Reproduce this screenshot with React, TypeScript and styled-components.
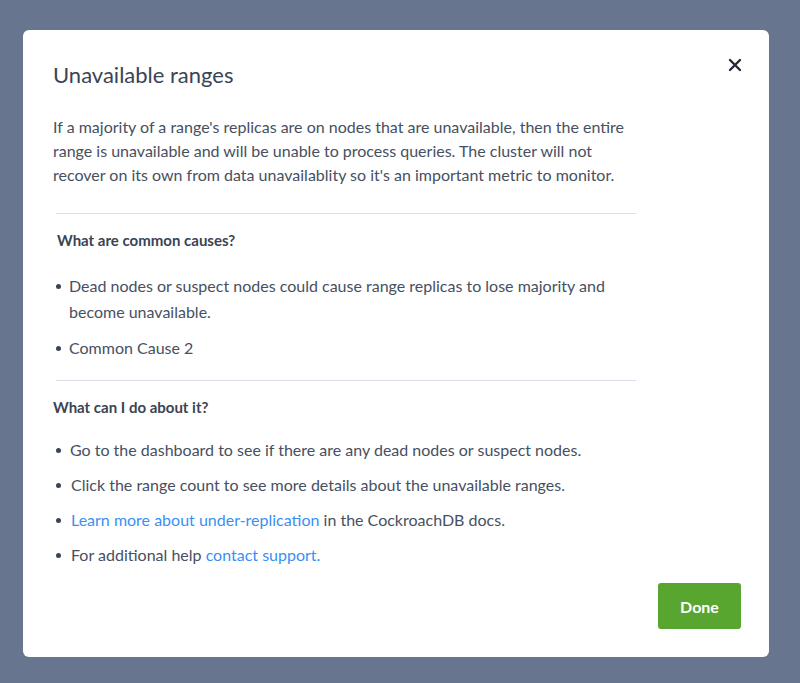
import React from 'react';
import styled, { createGlobalStyle } from 'styled-components';

const GlobalStyle = createGlobalStyle`
  html, body {
    margin: 0;
    padding: 0;
    background-color: #68758f;
    font-family: Lato, "Noto Sans", sans-serif;
  }
`

const Backdrop = styled.div`
  width: 800px;
  height: 683px;
  padding: 30px 31px 26px 23px;
  box-sizing: border-box;
  background-color: #68758f;
`

const Dialog = styled.div`
  width: 746px;
  height: 627px;
  box-sizing: border-box;
  background-color: #fff;
  border-radius: 6px;
  padding: 28px 28px 28px 30px;
  display: flex;
  flex-direction: column;
  color: #475061;
`

const Header = styled.div`
  display: flex;
  justify-content: space-between;
  align-items: flex-start;
`

const Title = styled.h2`
  margin: 0;
  font-size: 22px;
  font-weight: 400;
  line-height: 34px;
  color: #394455;
`

const CloseButton = styled.button`
  all: unset;
  cursor: pointer;
  width: 20px;
  height: 20px;
  margin: -3px -4px 0 0;
  display: flex;
  align-items: center;
  justify-content: center;
  color: #242a35;
`

const Description = styled.p`
  margin: 23px 0 0;
  font-size: 16px;
  line-height: 24px;
  max-width: 578px;
`

const Divider = styled.hr<{ $top: number }>`
  border: 0;
  border-top: 1px solid #dcdfea;
  margin: ${(p) => p.$top}px 0 0 3px;
  width: 580px;
`

const SectionTitle = styled.h4<{ $indent?: number }>`
  margin: 16px 0 0 ${(p) => p.$indent ?? 0}px;
  font-size: 15px;
  font-weight: 700;
  line-height: 20px;
  color: #394455;
`

const List = styled.ul<{ $top: number; $gap: number }>`
  list-style: none;
  margin: ${(p) => p.$top}px 0 0;
  padding: 0;
  display: flex;
  flex-direction: column;
  gap: ${(p) => p.$gap}px;
`

const Item = styled.li<{ $textLeft: number }>`
  position: relative;
  padding-left: ${(p) => p.$textLeft}px;
  font-size: 16px;
  line-height: 26px;
  max-width: 560px;

  &::before {
    content: '';
    position: absolute;
    left: 3px;
    top: 11px;
    width: 5px;
    height: 5px;
    border-radius: 50%;
    background-color: #394455;
  }
`

const Link = styled.a`
  color: #3a8ff5;
  text-decoration: none;
`

const Footer = styled.div`
  margin-top: auto;
  display: flex;
  justify-content: flex-end;
`

const DoneButton = styled.button`
  all: unset;
  cursor: pointer;
  width: 83px;
  height: 46px;
  border-radius: 3px;
  background-color: #58a52f;
  color: #fff;
  font-size: 16px;
  font-weight: 700;
  display: flex;
  align-items: center;
  justify-content: center;
`

const CloseIcon = () => (
  <svg width="14" height="14" viewBox="0 0 14 14" fill="none">
    <path d="M2 2L12 12M12 2L2 12" stroke="currentColor" strokeWidth="2.4" strokeLinecap="round" />
  </svg>
)

const App: React.FC = () => (
  <>
    <GlobalStyle />
    <Backdrop>
      <Dialog>
        <Header>
          <Title>Unavailable ranges</Title>
          <CloseButton type="button" aria-label="close">
            <CloseIcon />
          </CloseButton>
        </Header>
        <Description>
          If a majority of a range's replicas are on nodes that are unavailable, then the entire
          range is unavailable and will be unable to process queries. The cluster will not
          recover on its own from data unavailablity so it's an important metric to monitor.
        </Description>
        <Divider $top={26} />
        <SectionTitle $indent={4}>What are common causes?</SectionTitle>
        <List $top={23} $gap={10}>
          <Item $textLeft={16}>
            Dead nodes or suspect nodes could cause range replicas to lose majority and become
            unavailable.
          </Item>
          <Item $textLeft={16}>Common Cause 2</Item>
        </List>
        <Divider $top={19} />
        <SectionTitle>What can I do about it?</SectionTitle>
        <List $top={20} $gap={9}>
          <Item $textLeft={17}>Go to the dashboard to see if there are any dead nodes or suspect nodes.</Item>
          <Item $textLeft={18}>Click the range count to see more details about the unavailable ranges.</Item>
          <Item $textLeft={18}>
            <Link href="#">Learn more about under-replication</Link> in the CockroachDB docs.
          </Item>
          <Item $textLeft={18}>
            For additional help <Link href="#">contact support.</Link>
          </Item>
        </List>
        <Footer>
          <DoneButton type="button">Done</DoneButton>
        </Footer>
      </Dialog>
    </Backdrop>
  </>
)

export default App
